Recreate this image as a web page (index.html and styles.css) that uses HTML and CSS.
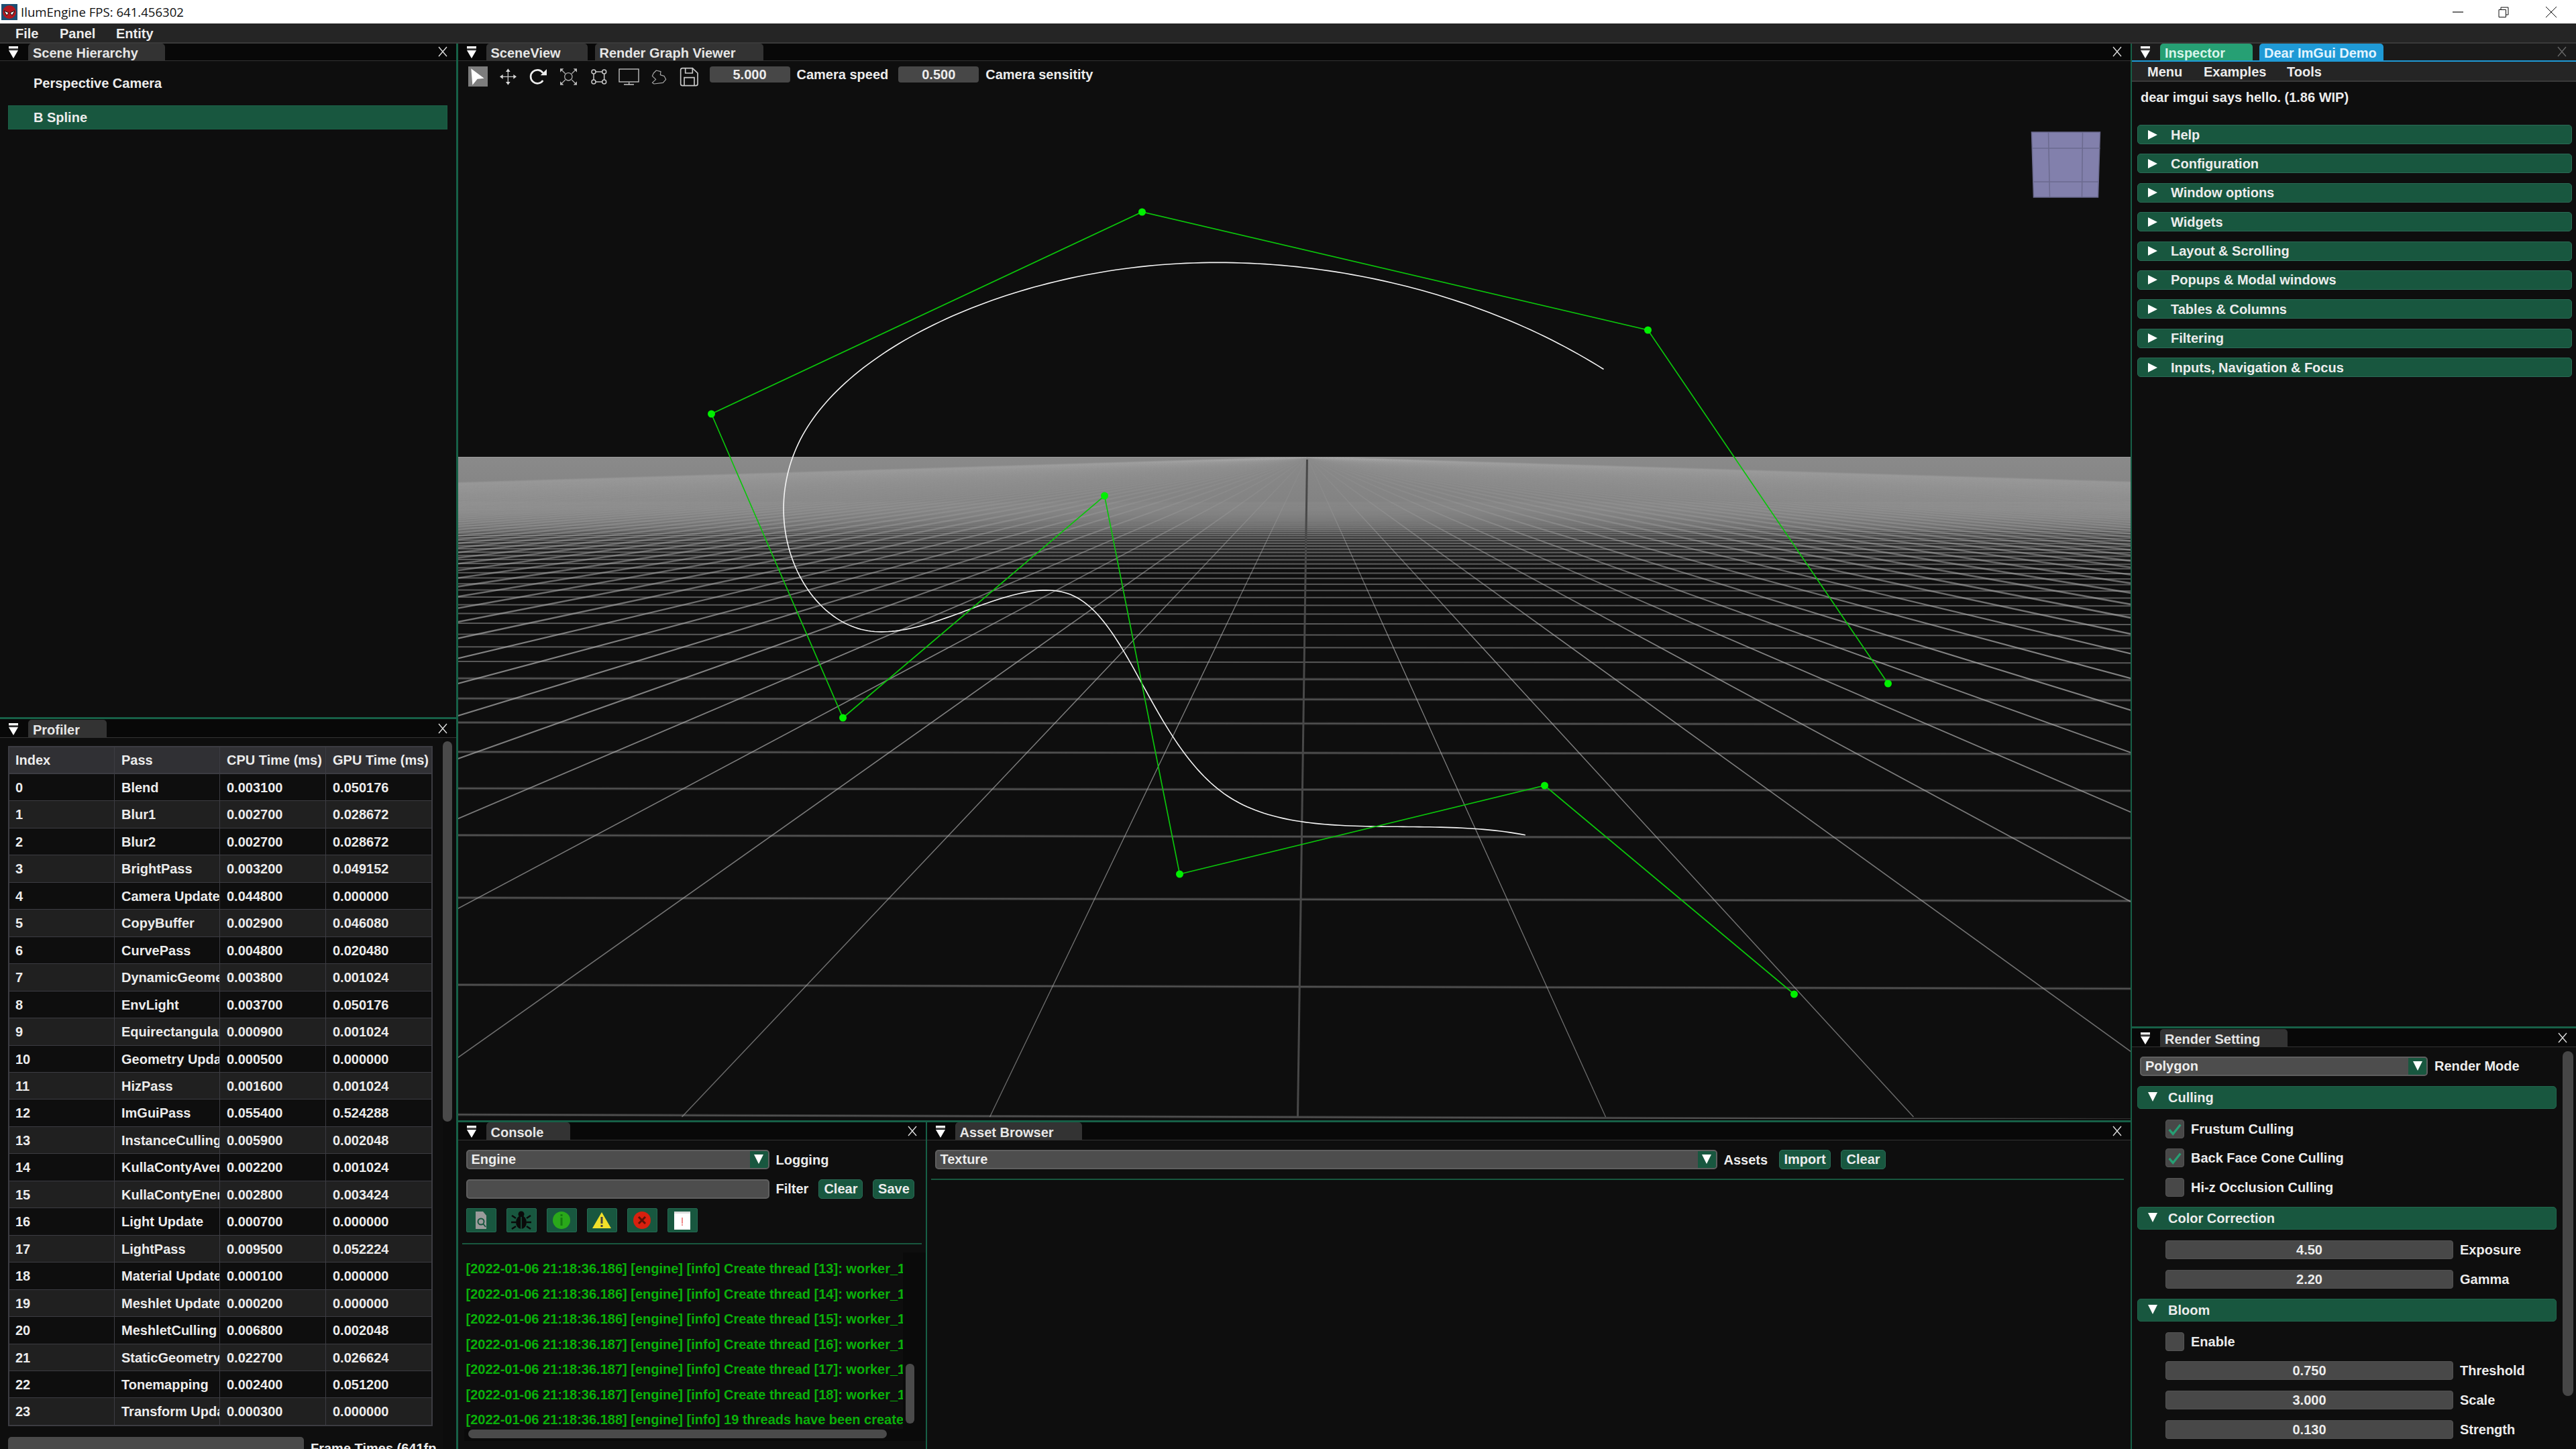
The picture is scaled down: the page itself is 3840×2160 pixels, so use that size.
FILE: index.html
```html
<!DOCTYPE html>
<html lang="en">
<head>
<meta charset="utf-8">
<title>IlumEngine</title>
<link rel="stylesheet" href="styles.css">
</head>
<body>
<svg class="defs" width="0" height="0" aria-hidden="true">
  <symbol id="dock" viewBox="0 0 16 18"><rect x="1" y="0" width="14" height="3" fill="#fff"/><rect x="1" y="3" width="14" height="2" fill="#555"/><path d="M1 6H15L8 18Z" fill="#fff"/></symbol>
  <symbol id="cross" viewBox="0 0 14 16"><path d="M1 1L13 15M13 1L1 15" stroke="currentColor" stroke-width="1.4" fill="none"/></symbol>
</svg>
<header class="titlebar">
  <svg class="logo" viewBox="0 0 24 24"><rect width="24" height="24" fill="#1d4f73"/><circle cx="12" cy="12" r="10" fill="#b3181f"/><path d="M4 10L11 13L8 17ZM20 10L13 13L16 17Z" fill="#fff" stroke="#111"/></svg>
  <span class="title-text">IlumEngine FPS: 641.456302</span>
  <div class="winctl">
    <svg class="wc wc-min" viewBox="0 0 16 16"><path d="M0 8H16" stroke="#111" stroke-width="1.2"/></svg>
    <svg class="wc wc-max" viewBox="0 0 16 16"><path d="M1 4.5H11.5V15.5H1ZM4 4.500V1H15V12H11.500" stroke="#111" fill="none"/></svg>
    <svg class="wc wc-close" viewBox="0 0 16 16"><path d="M0 0L16 16M16 0L0 16" stroke="#111" stroke-width="1"/></svg>
  </div>
</header>
<nav class="menubar"><span>File</span><span>Panel</span><span>Entity</span></nav>

<main class="workspace">
  <div class="col col-left">
    <section class="panel hierarchy">
      <div class="dock-head">
        <svg class="dock-ic"><use href="#dock"/></svg>
        <div class="tab tab-scene">Scene Hierarchy</div>
        <svg class="dock-x"><use href="#cross"/></svg>
      </div>
      <div class="tree-list">
        <div class="tree-row">Perspective Camera</div>
        <div class="tree-row selected">B Spline</div>
      </div>
    </section>
    <section class="panel profiler">
      <div class="dock-head">
        <svg class="dock-ic"><use href="#dock"/></svg>
        <div class="tab tab-prof">Profiler</div>
        <svg class="dock-x"><use href="#cross"/></svg>
      </div>
      <div class="prof-body">
        <div class="prof-main">
          <div class="ptable">
            <div class="prow phead"><div>Index</div><div>Pass</div><div>CPU Time (ms)</div><div>GPU Time (ms)</div></div>
            <div class="prow"><div>0</div><div>Blend</div><div>0.003100</div><div>0.050176</div></div>
            <div class="prow"><div>1</div><div>Blur1</div><div>0.002700</div><div>0.028672</div></div>
            <div class="prow"><div>2</div><div>Blur2</div><div>0.002700</div><div>0.028672</div></div>
            <div class="prow"><div>3</div><div>BrightPass</div><div>0.003200</div><div>0.049152</div></div>
            <div class="prow"><div>4</div><div>Camera Update</div><div>0.044800</div><div>0.000000</div></div>
            <div class="prow"><div>5</div><div>CopyBuffer</div><div>0.002900</div><div>0.046080</div></div>
            <div class="prow"><div>6</div><div>CurvePass</div><div>0.004800</div><div>0.020480</div></div>
            <div class="prow"><div>7</div><div>DynamicGeometryPass</div><div>0.003800</div><div>0.001024</div></div>
            <div class="prow"><div>8</div><div>EnvLight</div><div>0.003700</div><div>0.050176</div></div>
            <div class="prow"><div>9</div><div>EquirectangularToCubemap</div><div>0.000900</div><div>0.001024</div></div>
            <div class="prow"><div>10</div><div>Geometry Update</div><div>0.000500</div><div>0.000000</div></div>
            <div class="prow"><div>11</div><div>HizPass</div><div>0.001600</div><div>0.001024</div></div>
            <div class="prow"><div>12</div><div>ImGuiPass</div><div>0.055400</div><div>0.524288</div></div>
            <div class="prow"><div>13</div><div>InstanceCulling</div><div>0.005900</div><div>0.002048</div></div>
            <div class="prow"><div>14</div><div>KullaContyAverage</div><div>0.002200</div><div>0.001024</div></div>
            <div class="prow"><div>15</div><div>KullaContyEnergy</div><div>0.002800</div><div>0.003424</div></div>
            <div class="prow"><div>16</div><div>Light Update</div><div>0.000700</div><div>0.000000</div></div>
            <div class="prow"><div>17</div><div>LightPass</div><div>0.009500</div><div>0.052224</div></div>
            <div class="prow"><div>18</div><div>Material Update</div><div>0.000100</div><div>0.000000</div></div>
            <div class="prow"><div>19</div><div>Meshlet Update</div><div>0.000200</div><div>0.000000</div></div>
            <div class="prow"><div>20</div><div>MeshletCulling</div><div>0.006800</div><div>0.002048</div></div>
            <div class="prow"><div>21</div><div>StaticGeometryPass</div><div>0.022700</div><div>0.026624</div></div>
            <div class="prow"><div>22</div><div>Tonemapping</div><div>0.002400</div><div>0.051200</div></div>
            <div class="prow"><div>23</div><div>Transform Update</div><div>0.000300</div><div>0.000000</div></div>
          </div>
          <div class="frames"><div class="frames-plot"></div><div class="frames-label">Frame Times (641fps)</div></div>
        </div>
        <div class="prof-scroll"><div class="thumb prof-thumb"></div></div>
      </div>
    </section>
  </div>

  <div class="col col-center">
    <section class="panel sceneview">
      <div class="dock-head">
        <svg class="dock-ic"><use href="#dock"/></svg>
        <div class="tab tab-sv">SceneView</div>
        <div class="tab tab-rg">Render Graph Viewer</div>
        <svg class="dock-x"><use href="#cross"/></svg>
      </div>
      <div class="toolbar">
        <svg class="tool tool-on" viewBox="9 12 87 90"><path d="M22 22L80 65L50 68L28 95Z" fill="#fff"/></svg>
        <svg class="tool" viewBox="144 12 87 90"><path d="M187 30V86M160 58H215" stroke="#c4c4c4" stroke-width="4" fill="none"/><path d="M187 22L197 36H177ZM187 95L197 81H177ZM150 58L164 48V68ZM225 58L211 48V68Z" fill="#d8d8d8"/></svg>
        <svg class="tool" viewBox="279 12 87 90"><path d="M343 41A30 30 0 1 0 343 75" fill="none" stroke="#eee" stroke-width="8"/><path d="M360 24V52H332Z" fill="#eee"/></svg>
        <svg class="tool" viewBox="414 12 87 90" fill="#bbb" stroke="#aaa" stroke-width="4"><circle cx="457" cy="58" r="17" fill="none"/><path d="M425 26L443 44M490 26L472 44M425 90L443 72M490 90L472 72" fill="none"/><path d="M420 22H436L420 38ZM495 22H479L495 38ZM420 95H436L420 79ZM495 95H479L495 79Z" stroke="none"/></svg>
        <svg class="tool" viewBox="549 12 87 90" fill="none" stroke="#c8c8c8" stroke-width="4.500"><circle cx="570" cy="36" r="9"/><circle cx="617" cy="36" r="9"/><circle cx="570" cy="81" r="9"/><circle cx="617" cy="81" r="9"/><path d="M579 36H608M579 81H608M570 45V72M617 45V72"/></svg>
        <svg class="tool" viewBox="684 12 87 90" fill="none" stroke="#c8c8c8" stroke-width="4"><rect x="684" y="24" width="87" height="57"/><path d="M728 83V92M705 93H750"/></svg>
        <svg class="tool" viewBox="819 12 87 90" fill="none" stroke="#a8a8a8" stroke-width="3.500" stroke-linejoin="round"><path d="M850 30L870 35L868 50L885 55L893 70L880 85L840 90L832 85L848 70L832 55L838 42Z"/></svg>
        <svg class="tool" viewBox="954 12 87 90" fill="none" stroke="#c8c8c8" stroke-width="5"><path d="M965 20H1012L1035 42V90Q1035 98 1027 98H967Q959 98 959 90V28Q959 20 967 20ZM980 20V42H1012V20M975 98V62H1020V98"/></svg>
        <div class="num-in num-a">5.000</div><span class="tlabel">Camera speed</span>
        <div class="num-in num-b">0.500</div><span class="tlabel">Camera sensitity</span>
      </div>
      <canvas class="viewport" id="viewport"></canvas>
    </section>
    <div class="bottom-row">
      <section class="panel console">
        <div class="dock-head">
          <svg class="dock-ic"><use href="#dock"/></svg>
          <div class="tab tab-con">Console</div>
          <svg class="dock-x"><use href="#cross"/></svg>
        </div>
        <div class="con-body">
          <div class="form-row">
            <div class="combo combo-con"><span class="combo-val">Engine</span><span class="combo-arrow"><i class="tri-d"></i></span></div>
            <span class="lbl">Logging</span>
          </div>
          <div class="form-row">
            <div class="combo combo-con"></div>
            <span class="lbl">Filter</span>
            <div class="btn btn-clear-con">Clear</div>
            <div class="btn btn-save">Save</div>
          </div>
          <div class="icon-row">
            <div class="ic-btn"><svg viewBox="0 0 24 30"><path d="M4 2H15L20 8V28H4Z" fill="#9b9b9b"/><circle cx="12" cy="17" r="4.500" fill="none" stroke="#18573f" stroke-width="2"/><path d="M15 20L19 25" stroke="#18573f" stroke-width="2"/></svg></div>
            <div class="ic-btn"><svg viewBox="0 0 32 30"><ellipse cx="16" cy="18" rx="8" ry="10" fill="#0a0a0a"/><circle cx="16" cy="6" r="4.500" fill="#0a0a0a"/><path d="M8 12L2 8M8 18H1M8 24L2 28M24 12L30 8M24 18H31M24 24L30 28" stroke="#0a0a0a" stroke-width="2.500"/><path d="M16 10V28" stroke="#18573f" stroke-width="1.500"/></svg></div>
            <div class="ic-btn"><svg viewBox="0 0 32 30"><circle cx="16" cy="15" r="13" fill="#2aa81a"/><rect x="14.500" y="11" width="3" height="12" fill="#157a10"/><rect x="14.500" y="6" width="3" height="3" fill="#157a10"/></svg></div>
            <div class="ic-btn"><svg viewBox="0 0 32 30"><path d="M16 3L30 27H2Z" fill="#f0e02a"/><rect x="14.500" y="10" width="3" height="10" fill="#444"/><rect x="14.500" y="22" width="3" height="3" fill="#444"/></svg></div>
            <div class="ic-btn"><svg viewBox="0 0 32 30"><circle cx="16" cy="15" r="13" fill="#d8200f"/><path d="M11 10L21 20M21 10L11 20" stroke="#5a1208" stroke-width="3"/></svg></div>
            <div class="ic-btn"><svg viewBox="0 0 32 30"><rect x="4" y="2" width="24" height="27" fill="#fff"/><rect x="4" y="2" width="24" height="3" fill="#ddd"/><rect x="15" y="11" width="2" height="9" fill="#f08a8a"/><rect x="15" y="21" width="2" height="2" fill="#f08a8a"/></svg></div>
          </div>
          <div class="sep"></div>
          <div class="logbox">
            <div class="loglines">
              <div>[2022-01-06 21:18:36.186] [engine] [info] Create thread [13]: worker_13</div>
              <div>[2022-01-06 21:18:36.186] [engine] [info] Create thread [14]: worker_14</div>
              <div>[2022-01-06 21:18:36.186] [engine] [info] Create thread [15]: worker_15</div>
              <div>[2022-01-06 21:18:36.187] [engine] [info] Create thread [16]: worker_16</div>
              <div>[2022-01-06 21:18:36.187] [engine] [info] Create thread [17]: worker_17</div>
              <div>[2022-01-06 21:18:36.187] [engine] [info] Create thread [18]: worker_18</div>
              <div>[2022-01-06 21:18:36.188] [engine] [info] 19 threads have been created</div>
            </div>
            <div class="log-v"><div class="thumb log-vthumb"></div></div>
            <div class="log-h"><div class="thumb log-hthumb"></div></div>
          </div>
        </div>
      </section>
      <section class="panel assets">
        <div class="dock-head">
          <svg class="dock-ic"><use href="#dock"/></svg>
          <div class="tab tab-ast">Asset Browser</div>
          <svg class="dock-x"><use href="#cross"/></svg>
        </div>
        <div class="con-body">
          <div class="form-row">
            <div class="combo combo-ast"><span class="combo-val">Texture</span><span class="combo-arrow"><i class="tri-d"></i></span></div>
            <span class="lbl">Assets</span>
            <div class="btn btn-import">Import</div>
            <div class="btn btn-clear-ast">Clear</div>
          </div>
          <div class="sep sep-ast"></div>
        </div>
      </section>
    </div>
  </div>

  <div class="col col-right">
    <section class="panel inspector">
      <div class="dock-head dock-blue">
        <svg class="dock-ic"><use href="#dock"/></svg>
        <div class="tab tab-ins">Inspector</div>
        <div class="tab tab-demo">Dear ImGui Demo</div>
        <svg class="dock-x dim"><use href="#cross"/></svg>
      </div>
      <nav class="submenu"><span>Menu</span><span>Examples</span><span>Tools</span></nav>
      <p class="hello">dear imgui says hello. (1.86 WIP)</p>
      <div class="demo-list">
        <div class="hdr"><i class="tri-r"></i>Help</div>
        <div class="hdr"><i class="tri-r"></i>Configuration</div>
        <div class="hdr"><i class="tri-r"></i>Window options</div>
        <div class="hdr"><i class="tri-r"></i>Widgets</div>
        <div class="hdr"><i class="tri-r"></i>Layout &amp; Scrolling</div>
        <div class="hdr"><i class="tri-r"></i>Popups &amp; Modal windows</div>
        <div class="hdr"><i class="tri-r"></i>Tables &amp; Columns</div>
        <div class="hdr"><i class="tri-r"></i>Filtering</div>
        <div class="hdr"><i class="tri-r"></i>Inputs, Navigation &amp; Focus</div>
      </div>
    </section>
    <section class="panel rendersettings">
      <div class="dock-head">
        <svg class="dock-ic"><use href="#dock"/></svg>
        <div class="tab tab-rs">Render Setting</div>
        <svg class="dock-x"><use href="#cross"/></svg>
      </div>
      <div class="rs-body">
        <div class="rs-content">
          <div class="rs-row rs-first">
            <div class="combo combo-rs"><span class="combo-val">Polygon</span><span class="combo-arrow"><i class="tri-d"></i></span></div>
            <span class="lbl">Render Mode</span>
          </div>
          <div class="hdr hdr-open"><i class="tri-d"></i>Culling</div>
          <label class="rs-row indent"><span class="cb"><svg viewBox="0 0 28 28"><path d="M5 15L11 22L23 7" fill="none" stroke="#26a074" stroke-width="3.500"/></svg></span>Frustum Culling</label>
          <label class="rs-row indent"><span class="cb"><svg viewBox="0 0 28 28"><path d="M5 15L11 22L23 7" fill="none" stroke="#26a074" stroke-width="3.500"/></svg></span>Back Face Cone Culling</label>
          <label class="rs-row indent"><span class="cb"></span>Hi-z Occlusion Culling</label>
          <div class="hdr hdr-open"><i class="tri-d"></i>Color Correction</div>
          <div class="rs-row indent"><div class="slider">4.50</div><span class="lbl">Exposure</span></div>
          <div class="rs-row indent"><div class="slider">2.20</div><span class="lbl">Gamma</span></div>
          <div class="hdr hdr-open"><i class="tri-d"></i>Bloom</div>
          <label class="rs-row indent"><span class="cb"></span>Enable</label>
          <div class="rs-row indent"><div class="slider">0.750</div><span class="lbl">Threshold</span></div>
          <div class="rs-row indent"><div class="slider">3.000</div><span class="lbl">Scale</span></div>
          <div class="rs-row indent"><div class="slider">0.130</div><span class="lbl">Strength</span></div>
          <div class="hdr hdr-open"></div>
        </div>
        <div class="rs-scroll"><div class="thumb rs-thumb"></div></div>
      </div>
    </section>
  </div>
</main>
<script src="scene.js"></script>
</body>
</html>
```
FILE: styles.css
```css
* { box-sizing: border-box; }
html, body { margin: 0; padding: 0; width: 3840px; height: 2160px; overflow: hidden; background: #0e0e0e; }
body { font: bold 20px/1 "Liberation Sans", Arial, sans-serif; color: #ececec; }
.defs { position: absolute; }

.titlebar { height: 35px; background: #fff; display: flex; align-items: center; color: #111; font: 400 18.600px "Open Sans", sans-serif; }
.logo { width: 24px; height: 24px; margin-left: 2px; }
.title-text { margin-left: 5px; }
.winctl { margin-left: auto; display: flex; align-items: center; }
.wc { display: block; width: 16px; height: 16px; }
.wc-min { margin-right: 52px; }
.wc-max { margin-right: 55px; }
.wc-close { margin-right: 29px; }

.menubar { height: 30px; background: #252525; border-bottom: 2px solid #3a3a3a; display: flex; align-items: center; padding: 1px 0 0 23px; }
.menubar span:nth-child(1) { width: 66px; }
.menubar span:nth-child(2) { width: 84px; }

.workspace { display: grid; grid-template-columns: 680px 2493px 662px; column-gap: 2.500px; height: 2095px; background: #176047; }
.col { display: grid; min-width: 0; min-height: 0; }
.col-left { grid-template-rows: 1004px 1088px; row-gap: 3px; }
.col-center { grid-template-rows: 1605px 487px; row-gap: 3px; }
.col-right { grid-template-rows: 1465px 627px; row-gap: 3px; }
.panel { background: #0e0e0e; overflow: hidden; min-width: 0; min-height: 0; display: flex; flex-direction: column; }

.dock-head { flex: none; height: 26px; background: #080808; border-bottom: 1px solid #333; display: flex; align-items: flex-end; }
.profiler .dock-head, .rendersettings .dock-head { height: 28px; }
.console .dock-head, .assets .dock-head { height: 27px; }
.profiler .tab, .rendersettings .tab, .console .tab, .assets .tab { height: 26px; padding-top: 5px; }
.dock-blue { border-bottom: 2px solid #1f9ad6; height: 27px; background: #1a1a1a; }
.dock-ic { width: 16px; height: 18px; margin: 0 14px 3px 12px; flex: none; }
.dock-x { width: 14px; height: 16px; margin: 0 13px 5px auto; color: #ddd; flex: none; }
.dock-x.dim { color: #666; margin-right: 14px; }
.tab { height: 25px; background: #333; border-radius: 5px 5px 0 0; padding: 4px 7px 0; flex: none; color: #e6e6e6; }
.tab-scene { width: 204px; }
.tab-prof { width: 117px; }
.tab-sv { width: 151px; margin-right: 11px; }
.tab-rg { width: 251px; }
.tab-con { width: 125px; }
.tab-ast { width: 189px; }
.tab-ins { width: 138px; margin-right: 10px; background: #26a074; color: #d8f5ea; }
.tab-demo { width: 185px; background: #1f9ad6; color: #e2f4ff; }
.tab-rs { width: 190px; }

.tree-list { padding: 16px 13px 0 12px; display: flex; flex-direction: column; gap: 14px; }
.tree-row { height: 36px; line-height: 35px; padding-left: 38px; }
.tree-row.selected { background: #18573f; border: 1px solid #1c5f46; line-height: 35px; padding-left: 37px; }

.prof-body { flex: 1; min-height: 0; display: flex; overflow: hidden; }
.prof-main { width: 660px; padding: 12px 0 0 12px; overflow: hidden; }
.ptable { width: 633px; border: 1px solid #3c3c42; border-width: 2px 1px 1px 2px; }
.prow { display: grid; grid-template-columns: 157px 157px 158px 158px; height: 40.460px; align-items: stretch; }
.prow > div { padding-left: 10px; line-height: 40px; white-space: nowrap; overflow: hidden; border-right: 1px solid #3c3c42; border-bottom: 1px solid #3c3c42; }
.prow > div:first-child { padding-left: 9px; }
.prow:nth-child(odd) { background: #202020; }
.phead { background: #303034 !important; height: 40px; }
.prow.phead > div { border-bottom-width: 2px; line-height: 38px; }
.frames { display: flex; margin-top: 16px; height: 40px; }
.frames-plot { width: 441px; background: #4a4a4a; border-radius: 5px 5px 0 0; flex: none; }
.frames-label { width: 187px; margin-left: 10px; padding-top: 7px; white-space: nowrap; overflow: hidden; }
.prof-scroll { width: 20px; background: #0c0c0c; padding-top: 5px; }
.thumb { background: #4a4a4a; border-radius: 7px; }
.prof-thumb { width: 14px; height: 567px; }

.toolbar { flex: none; height: 38px; padding: 8px 0 0 15px; display: flex; align-items: flex-start; }
.tool { width: 29px; height: 30px; margin-right: 16px; flex: none; overflow: visible; }
.tool-on { background: #7d7d7d; }
.num-in { width: 120px; height: 24px; line-height: 25px; background: #474747; border-radius: 4px; text-align: center; flex: none; }
.num-a { margin-left: 0; }
.num-b { margin-left: 15px; }
.tlabel { margin-left: 10px; line-height: 25px; white-space: nowrap; }
.viewport { flex: 1; min-height: 0; display: block; width: 100%; }

.bottom-row { display: grid; grid-template-columns: 697px 1794px; column-gap: 2px; min-height: 0; }
.con-body { flex: 1; min-height: 0; padding: 14px 0 0 12px; }
.form-row { display: flex; align-items: center; height: 29px; margin-bottom: 14.500px; }
.combo { height: 29px; background: #4d4d4d; border: 2px solid #5f5f5f; border-radius: 5px; display: flex; overflow: hidden; line-height: 25px; flex: none; }
.combo-con { width: 452px; }
.combo-ast { width: 1166px; }
.combo-rs { width: 429px; }
.combo-val { flex: 1; padding-left: 6px; }
.combo-arrow { width: 27px; background: #18573f; display: flex; justify-content: center; padding-top: 5px; }
.tri-d { display: block; width: 0; height: 0; border: 7.500px solid transparent; border-top: 14px solid #fff; border-bottom: 0; }
.tri-r { display: block; width: 0; height: 0; border: 7.500px solid transparent; border-left: 14px solid #fff; border-right: 0; flex: none; }
.lbl { margin-left: 10px; white-space: nowrap; }
.btn { height: 29px; line-height: 27px; text-align: center; background: #18573f; border: 1px solid #2a6a55; border-radius: 5px; flex: none; }
.btn-clear-con { width: 66px; margin-left: 15px; }
.btn-save { width: 62px; margin-left: 15px; }
.btn-import { width: 77px; margin-left: 17px; }
.btn-clear-ast { width: 67px; margin-left: 15px; }

.icon-row { display: flex; height: 36px; gap: 15px; margin-bottom: 16px; }
.ic-btn { width: 45px; height: 36px; background: #18573f; border: 1px solid #246a52; border-radius: 2px; display: flex; justify-content: center; align-items: center; }
.ic-btn svg { width: 34px; height: 30px; display: block; }
.sep { height: 2px; width: 685px; margin-left: -6px; background: #18573f; margin-bottom: 12px; }
.sep-ast { width: 1778px; margin-left: -6px; margin-top: -1px; }
.logbox { margin-left: -3px; display: grid; grid-template-columns: 654px 24px; grid-template-rows: 263px 18px; background: #0a0a0a; }
.loglines { background: #0e0e0e; padding: 6px 0 0 3px; overflow: hidden; color: #0ab00a; white-space: nowrap; }
.loglines div { height: 37.500px; line-height: 37.500px; }
.log-v { padding: 166px 0 0 4px; margin-bottom: -18px; }
.log-vthumb { width: 13px; height: 89px; border-radius: 6px; }
.log-h { padding: 1px 0 0 6px; }
.log-hthumb { width: 624px; height: 13px; }

.submenu { flex: none; height: 30px; background: #252525; border-bottom: 2px solid #3a3a3a; display: flex; align-items: center; padding: 1px 0 0 23px; }
.submenu span:nth-child(1) { width: 84px; }
.submenu span:nth-child(2) { width: 124px; }
.hello { margin: 0; padding: 13px 0 0 13px; height: 64px; line-height: 20px; }
.demo-list { padding: 0 6px 0 8px; display: flex; flex-direction: column; gap: 14.400px; }
.hdr { height: 29px; background: #18573f; border: 1px solid #2a6a55; border-radius: 5px; display: flex; align-items: center; padding-left: 15px; flex: none; }
.hdr .tri-r { margin-right: 20px; }
.hdr-open { height: 34px; background: #18573f; border-color: #20664c; flex: none; }
.hdr-open .tri-d { margin-right: 16px; margin-top: -3px; }

.rs-body { flex: 1; min-height: 0; display: flex; overflow: hidden; }
.rs-content { width: 642px; padding: 13.500px 9px 0 8px; display: flex; flex-direction: column; gap: 15.600px; flex: none; }
.rs-row { display: flex; align-items: center; height: 28px; flex: none; white-space: nowrap; }
.rs-first { margin-left: 4px; height: 29px; }
.rs-scroll { width: 20px; padding-top: 6px; }
.rs-thumb { width: 16px; height: 514px; border-radius: 8px; background: #464646; }
.indent { margin-left: 42px; }
.cb { width: 28px; height: 28px; background: #484848; border: 1px solid #555; border-radius: 4px; margin-right: 10px; flex: none; }
.cb svg { display: block; width: 26px; height: 26px; }
.slider { width: 429px; height: 28px; text-align: center; background: #484848; border: 1px solid #525252; border-radius: 4px; line-height: 26px; flex: none; }
```
FILE: scene.js
```js
(function () {
  var c = document.getElementById('viewport');
  var r = c.getBoundingClientRect();
  c.width = Math.round(r.width);
  c.height = Math.round(r.height);
  var g = c.getContext('2d');
  g.translate(-r.left, -r.top);
  var L = r.left, R = r.right, H = 681, VX = 1948, B = 1668;

  g.save();
  g.beginPath();
  g.rect(L, H, R - L, B - H);
  g.clip();

  var band = g.createLinearGradient(0, H, 0, 850);
  band.addColorStop(0, '#8a8a8a');
  band.addColorStop(0.46, '#828282');
  band.addColorStop(0.62, '#5e5e5e');
  band.addColorStop(0.72, '#303030');
  band.addColorStop(1, '#0e0e0e');
  g.fillStyle = band;
  g.fillRect(L, H, R - L, 169);

  function tilt(x, y) { return y + (x - VX) * (y - H) * 3e-6; }
  function hline(y, w, col) {
    g.strokeStyle = col;
    g.lineWidth = w;
    g.beginPath();
    g.moveTo(L, tilt(L, y));
    g.lineTo(R, tilt(R, y));
    g.stroke();
  }
  for (var n = 0; n < 56; n++) {
    var y = H + 1 / (0.001016 + 0.00025 * n);
    if (y > 1000) {
      hline(y, 4, 'rgba(120,120,120,0.32)');
      hline(y, 1.5, 'rgba(150,150,150,0.4)');
    } else {
      hline(y, 2, 'rgba(135,135,135,0.62)');
    }
  }
  var fade = g.createLinearGradient(0, H, 0, H + 984);
  fade.addColorStop(0, 'rgba(175,175,175,0.03)');
  fade.addColorStop(0.08, 'rgba(175,175,175,0.2)');
  fade.addColorStop(0.13, 'rgba(175,175,175,0.45)');
  fade.addColorStop(0.3, 'rgba(175,175,175,0.72)');
  fade.addColorStop(1, 'rgba(160,160,160,0.62)');
  for (var m = -70; m <= 70; m++) {
    if (m === 0) continue;
    var a = Math.abs(m);
    g.strokeStyle = fade;
    g.lineWidth = Math.min(2.6, 1.2 + a * 0.12);
    g.beginPath();
    g.moveTo(VX, H);
    g.lineTo(VX - 14 + 459 * m, H + 984);
    g.stroke();
  }
  g.strokeStyle = '#9a9a9a';
  g.lineWidth = 2;
  g.beginPath();
  g.moveTo(L, H);
  g.lineTo(R, H);
  g.stroke();
  g.strokeStyle = '#484848';
  g.lineWidth = 3;
  g.beginPath();
  g.moveTo(VX, H + 4);
  g.lineTo(VX - 14, H + 984);
  g.stroke();
  g.restore();

  var P = [[2674, 1482], [2302, 1171], [1758, 1303], [1646, 739], [1256, 1070], [1060, 617], [1702, 316], [2456, 492], [2814, 1019]];
  g.strokeStyle = '#f4f4f4';
  g.lineWidth = 1.6;
  g.beginPath();
  for (var i = 0; i + 3 < P.length; i++) {
    for (var k = 0; k <= 60; k++) {
      var t = k / 60, u = 1 - t;
      var b0 = u * u * u / 6, b1 = (3 * t * t * t - 6 * t * t + 4) / 6, b2 = (-3 * t * t * t + 3 * t * t + 3 * t + 1) / 6, b3 = t * t * t / 6;
      var x = b0 * P[i][0] + b1 * P[i + 1][0] + b2 * P[i + 2][0] + b3 * P[i + 3][0];
      var yy = b0 * P[i][1] + b1 * P[i + 1][1] + b2 * P[i + 2][1] + b3 * P[i + 3][1];
      if (i === 0 && k === 0) g.moveTo(x, yy); else g.lineTo(x, yy);
    }
  }
  g.stroke();

  g.strokeStyle = '#0bc40b';
  g.lineWidth = 1.7;
  g.beginPath();
  P.forEach(function (p, j) { if (j) g.lineTo(p[0], p[1]); else g.moveTo(p[0], p[1]); });
  g.stroke();
  g.fillStyle = '#00f000';
  P.forEach(function (p) { g.beginPath(); g.arc(p[0], p[1], 5.5, 0, 7); g.fill(); });

  g.fillStyle = '#8280ac';
  g.beginPath();
  g.moveTo(3028, 197); g.lineTo(3130, 197); g.lineTo(3127, 294); g.lineTo(3031, 294);
  g.closePath();
  g.fill();
  g.strokeStyle = '#6b6a8e';
  g.lineWidth = 1.5;
  g.stroke();
  g.beginPath();
  g.moveTo(3029, 221); g.lineTo(3130, 221);
  g.moveTo(3030, 271); g.lineTo(3128, 271);
  g.moveTo(3053, 197); g.lineTo(3055, 294);
  g.moveTo(3104, 197); g.lineTo(3103, 294);
  g.stroke();
})();
```
